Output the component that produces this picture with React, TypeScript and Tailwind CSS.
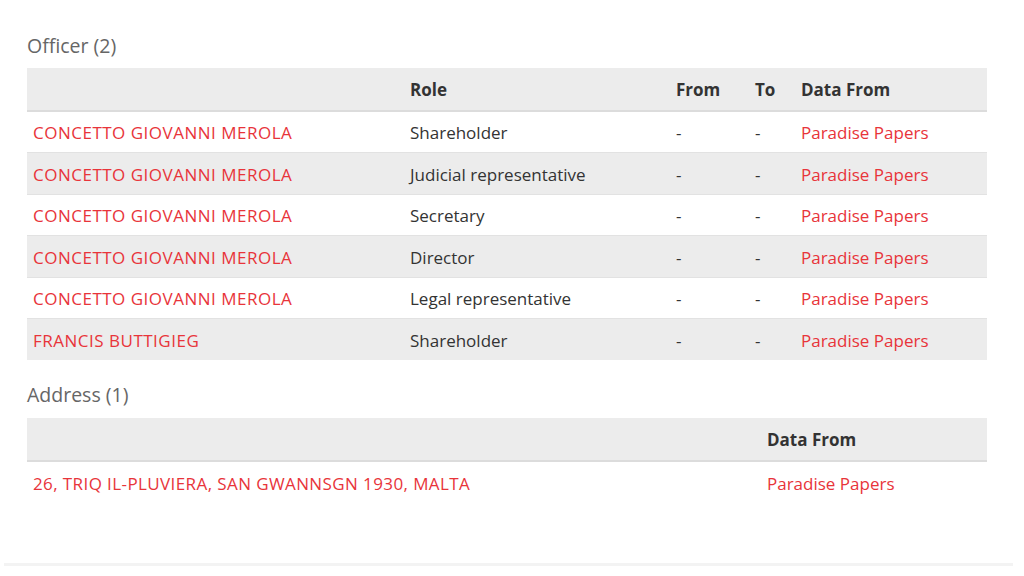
import React from "react";

const officers = [
  ["CONCETTO GIOVANNI MEROLA", "Shareholder"],
  ["CONCETTO GIOVANNI MEROLA", "Judicial representative"],
  ["CONCETTO GIOVANNI MEROLA", "Secretary"],
  ["CONCETTO GIOVANNI MEROLA", "Director"],
  ["CONCETTO GIOVANNI MEROLA", "Legal representative"],
  ["FRANCIS BUTTIGIEG", "Shareholder"],
];

export default function App() {
  return (
    <div
      className="w-[1024px] h-[576px] bg-white relative overflow-hidden text-[17px] text-[#333]"
      style={{ fontFamily: '"Open Sans", "Noto Sans", sans-serif' }}
    >
      <div className="pl-[27px] pr-[37px] pt-[32px]">
        <div className="text-[19.5px] text-[#666] leading-[28px] h-[36px]">Officer (2)</div>
        <table className="w-[960px] table-fixed border-collapse">
          <colgroup>
            <col className="w-[377px]" />
            <col className="w-[266px]" />
            <col className="w-[79px]" />
            <col className="w-[46px]" />
            <col className="w-[192px]" />
          </colgroup>
          <thead>
            <tr className="bg-[#ececec] h-[43px] border-b-2 border-[#dcdcdc]">
              <th className="px-[6px] pt-[2px] text-left font-bold"></th>
              <th className="px-[6px] pt-[2px] text-left font-bold">Role</th>
              <th className="px-[6px] pt-[2px] text-left font-bold">From</th>
              <th className="px-[6px] pt-[2px] text-left font-bold">To</th>
              <th className="px-[6px] pt-[2px] text-left font-bold">Data From</th>
            </tr>
          </thead>
          <tbody>
            {officers.map(([n, r], i) => (
              <tr
                key={i}
                className={`h-[41.5px] ${i < 5 ? "border-b border-[#e2e2e2]" : ""} ${i % 2 === 1 ? "bg-[#ececec]" : "bg-white"}`}
              >
                <td className="px-[6px] pt-[2px] text-[#e8343a] tracking-[0.5px]">{n}</td>
                <td className="px-[6px] pt-[2px]">{r}</td>
                <td className="px-[6px] pt-[2px]">-</td>
                <td className="px-[6px] pt-[2px]">-</td>
                <td className="px-[6px] pt-[2px] text-[#e8343a]">Paradise Papers</td>
              </tr>
            ))}
          </tbody>
        </table>
        <div className="text-[19.5px] text-[#666] leading-[28px] h-[58px] pt-[21px]">Address (1)</div>
        <table className="w-[960px] table-fixed border-collapse">
          <colgroup>
            <col className="w-[734px]" />
            <col className="w-[226px]" />
          </colgroup>
          <thead>
            <tr className="bg-[#ececec] h-[43px] border-b-2 border-[#dcdcdc]">
              <th className="px-[6px] pt-[2px] text-left font-bold"></th>
              <th className="px-[6px] pt-[2px] text-left font-bold">Data From</th>
            </tr>
          </thead>
          <tbody>
            <tr className="h-[43px]">
              <td className="px-[6px] pt-[2px] text-[#e8343a] tracking-[0.4px]">26, TRIQ IL-PLUVIERA, SAN GWANNSGN 1930, MALTA</td>
              <td className="px-[6px] pt-[2px] text-[#e8343a]">Paradise Papers</td>
            </tr>
          </tbody>
        </table>
      </div>
      <div className="absolute left-[4px] right-[11px] top-[563px] h-[3px] bg-[#f3f3f3]"></div>
    </div>
  );
}
